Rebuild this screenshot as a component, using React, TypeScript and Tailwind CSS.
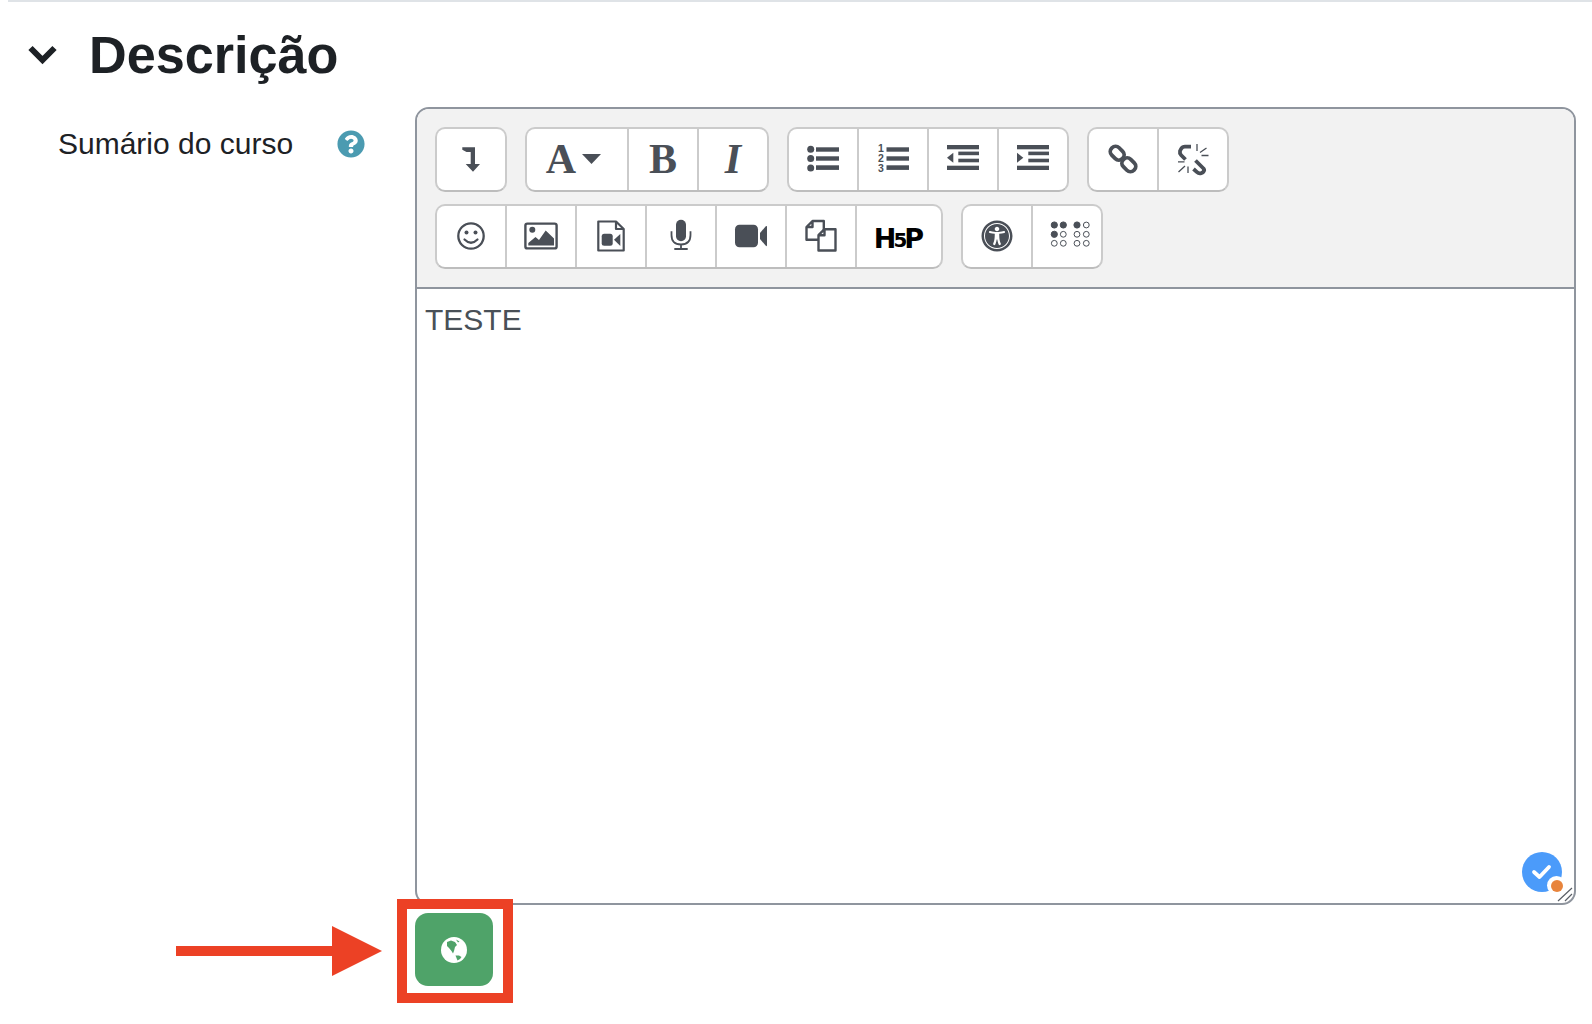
import React from "react";
import { FaQuestionCircle, FaUniversalAccess } from "react-icons/fa";

const C = "#4a4f57";

function Ico({ children, w = 40, h = 40 }: { children: React.ReactNode; w?: number; h?: number }) {
  return (
    <svg width={w} height={h} viewBox={`${-w / 2} ${-h / 2} ${w} ${h}`} fill={C} className="block shrink-0">
      {children}
    </svg>
  );
}

function Btn({ children, w, first }: { children: React.ReactNode; w: string; first?: boolean }) {
  return (
    <div className={`${w} ${first ? "" : "border-l-2 border-[#cbcbcb]"} pb-[2px] flex items-center justify-center`}>
      {children}
    </div>
  );
}

function Group({ children }: { children: React.ReactNode }) {
  return (
    <div className="flex h-[65px] bg-white rounded-[10px] border-2 border-[#cbcbcb] border-b-[#bdbdbd] overflow-hidden">
      {children}
    </div>
  );
}

const Bars = ({ x }: { x: number }) => (
  <>
    <rect x={x} y={-11.7} width={16 - x} height={4.4} />
    <rect x={x} y={-2.7} width={16 - x} height={4.4} />
    <rect x={x} y={6.3} width={16 - x} height={4.6} />
  </>
);

const IndentBars = () => (
  <>
    <rect x={-16} y={-14} width={32} height={4.3} />
    <rect x={-4.7} y={-7.4} width={20.7} height={3.6} />
    <rect x={-4.7} y={-0.3} width={20.7} height={3.6} />
    <rect x={-16} y={6.7} width={32} height={4.3} />
  </>
);

const W1 = "w-[68px]";
const W = "w-[70px]";

export default function App() {
  return (
    <div className="relative w-[1592px] h-[1024px] overflow-hidden bg-white font-['Liberation_Sans',sans-serif] text-[#1d2125]">
      <div className="ml-[8px] h-[2px] bg-[#dfe3e7]" />

      <div className="flex items-center h-[105px] pl-[28px]">
        <svg width="29" height="20" viewBox="0 0 29 20" fill="none" stroke="#1d2125" strokeWidth={6} className="block">
          <path d="M2.5 3L14.5 15L26.5 3" />
        </svg>
        <h2 className="ml-[32px] mt-[2px] text-[52.2px] leading-none font-bold">Descrição</h2>
      </div>

      <div className="flex">
        <div className="w-[415px] flex items-center h-[74px] pl-[58px] self-start">
          <span className="text-[30px] leading-none">Sumário do curso</span>
          <FaQuestionCircle size={28} className="ml-[44px] text-[#4b9bb1]" />
        </div>

        <div className="relative w-[1161px] h-[798px] border-2 border-[#8f959e] rounded-[14px] overflow-hidden">
          <div className="h-[180px] bg-[#f2f2f2] border-b-2 border-[#8f959e] pt-[18px] pl-[18px] flex flex-col gap-[12px]">
            <div className="flex gap-[18px]">
              <Group>
                <Btn w={W1} first>
                  <Ico>
                    <path d="M-8.7-11.7H4V5H9L2 12.7L-5.3 5H-0.3V-7H-4.5L-8.7-9.2Z" />
                  </Ico>
                </Btn>
              </Group>
              <Group>
                <Btn w="w-[100px]" first>
                  <span className="font-['Liberation_Serif',serif] font-bold text-[42px] leading-none text-[#4a4f57] mr-[6px]">A</span>
                  <svg width="19" height="10" viewBox="0 0 19 10" fill={C} className="mr-[7px]">
                    <path d="M0 0H19L9.5 10Z" />
                  </svg>
                </Btn>
                <Btn w={W}>
                  <span className="font-['Liberation_Serif',serif] font-bold text-[42px] leading-none text-[#4a4f57]">B</span>
                </Btn>
                <Btn w={W}>
                  <span className="font-['Liberation_Serif',serif] font-bold italic text-[42px] leading-none text-[#4a4f57]">I</span>
                </Btn>
              </Group>
              <Group>
                <Btn w={W1} first>
                  <Ico>
                    <circle cx={-12.3} cy={-9.7} r={3.5} />
                    <circle cx={-12.3} cy={-0.5} r={3.5} />
                    <circle cx={-12.3} cy={9} r={3.5} />
                    <Bars x={-7} />
                  </Ico>
                </Btn>
                <Btn w={W}>
                  <Ico>
                    <g fontFamily="'Liberation Sans',sans-serif" fontWeight="700" fontSize="10.5" textAnchor="middle">
                      <text x={-12} y={-7}>1</text>
                      <text x={-12} y={3}>2</text>
                      <text x={-12} y={13}>3</text>
                    </g>
                    <Bars x={-6.5} />
                  </Ico>
                </Btn>
                <Btn w={W}>
                  <Ico>
                    <IndentBars />
                    <path d="M-16-1.3L-9.7-6.3V3.7Z" />
                  </Ico>
                </Btn>
                <Btn w={W}>
                  <Ico>
                    <IndentBars />
                    <path d="M-9.7-1.3L-16-6.3V3.7Z" />
                  </Ico>
                </Btn>
              </Group>
              <Group>
                <Btn w={W1} first>
                  <Ico>
                    <g fill="none" stroke={C} strokeWidth={3.8}>
                      <rect x={-7.5} y={-5.2} width={15} height={10.4} rx={5} transform="translate(-5.8 -5.8) rotate(45)" />
                      <rect x={-7.5} y={-5.2} width={15} height={10.4} rx={5} transform="translate(5.8 5.8) rotate(45)" />
                    </g>
                  </Ico>
                </Btn>
                <Btn w={W}>
                  <Ico>
                    <g fill="none" stroke={C} strokeWidth={3.8} strokeLinejoin="round">
                      <path d="M-2-12.3H-8Q-10.5-12.3-12-10L-13-8Q-13.5-5.5-12-4L-7.5 0.5" />
                      <path d="M2.5 1.5L10.5 9.5Q12 11.5 10 13.2L8.5 14Q6 15 4 13.2L0.5 10" />
                    </g>
                    <g stroke={C} strokeWidth={1.3}>
                      <path d="M4-15V-8M7-6.5L13.5-11M8.5-3.5H15.5M-15 2.8H-8.5M-14.5 13L-8 7M-5 7.5V14" />
                    </g>
                  </Ico>
                </Btn>
              </Group>
            </div>

            <div className="flex gap-[18px]">
              <Group>
                <Btn w={W1} first>
                  <Ico>
                    <circle r={12.7} fill="none" stroke={C} strokeWidth={2.3} />
                    <circle cx={-4.5} cy={-3.5} r={2} />
                    <circle cx={4.5} cy={-3.5} r={2} />
                    <path d="M-6.5 3.5Q0 10 6.5 3.5" fill="none" stroke={C} strokeWidth={2.2} strokeLinecap="round" />
                  </Ico>
                </Btn>
                <Btn w={W}>
                  <Ico>
                    <rect x={-15.6} y={-12.4} width={31.2} height={24.8} rx={2} fill="none" stroke={C} strokeWidth={2.4} />
                    <circle cx={-8.7} cy={-6.2} r={3} />
                    <path d="M-12.7 9.5V7L-5.5 1L-2 4L4.7-5.5L13 2.5V9.5Z" />
                  </Ico>
                </Btn>
                <Btn w={W}>
                  <Ico>
                    <path d="M-12.7-14.5H5L12.7-7V14.5H-12.7Z M5-14V-7H12.5" fill="none" stroke={C} strokeWidth={2.2} strokeLinejoin="round" />
                    <rect x={-9.3} y={-2.2} width={11} height={12} rx={2.5} />
                    <path d="M3 3.8L9.3-2V10Z" />
                  </Ico>
                </Btn>
                <Btn w={W}>
                  <Ico>
                    <rect x={-5} y={-16.2} width={10} height={21.4} rx={5} />
                    <path d="M-9.5-4.8V-1Q-9.5 8.5 0 8.5Q9.5 8.5 9.5-1V-4.8M0 8.5V13M-6.7 13H6.7" fill="none" stroke={C} strokeWidth={1.8} />
                  </Ico>
                </Btn>
                <Btn w={W}>
                  <Ico>
                    <rect x={-16} y={-11.3} width={23} height={22.6} rx={4.5} />
                    <path d="M9-3L15-10Q16-10.5 16-9V9Q16 10.5 15 10L9 3Z" />
                  </Ico>
                </Btn>
                <Btn w={W}>
                  <Ico>
                    <g fill="#fff" stroke={C} strokeWidth={2.4} strokeLinejoin="round">
                      <path d="M-8.5-15H2.8V3.8H-14.5V-9Z M-8.5-15V-9H-14.5" />
                      <path d="M3.5-6.8H14.5V14.5H-2.5V-0.8Z M3.5-6.8V-0.8H-2.5" />
                    </g>
                  </Ico>
                </Btn>
                <Btn w="w-[86px]">
                  <span className="font-['DejaVu_Sans',sans-serif] font-bold text-[27px] leading-none text-black mt-[6px] flex items-center">
                    <span>H</span>
                    <span className="text-[20px] -mx-[3px] mt-[2px]">5</span>
                    <span>P</span>
                  </span>
                </Btn>
              </Group>
              <Group>
                <Btn w={W1} first>
                  <FaUniversalAccess size={32} color={C} />
                </Btn>
                <Btn w={W}>
                  <Ico w={48}>
                    <g stroke={C} strokeWidth={1} fill="none">
                      <circle cx={-12.7} cy={-11} r={3.1} fill={C} />
                      <circle cx={-3.7} cy={-11} r={3.1} fill={C} />
                      <circle cx={10} cy={-11} r={3.1} fill={C} />
                      <circle cx={19.3} cy={-11} r={2.9} />
                      <circle cx={-12.7} cy={-1.7} r={3.1} fill={C} />
                      <circle cx={-3.7} cy={-1.7} r={2.9} />
                      <circle cx={10} cy={-1.7} r={2.9} />
                      <circle cx={19.3} cy={-1.7} r={2.9} />
                      <circle cx={-12.7} cy={7.3} r={2.9} />
                      <circle cx={-3.7} cy={7.3} r={2.9} />
                      <circle cx={10} cy={7.3} r={2.9} />
                      <circle cx={19.3} cy={7.3} r={2.9} />
                    </g>
                  </Ico>
                </Btn>
              </Group>
            </div>
          </div>

          <div className="pl-[8px] pt-[14px] text-[30px] leading-[34px] text-[#495057]">TESTE</div>

          <div className="absolute right-[12px] bottom-[11px] w-[40px] h-[40px] rounded-full bg-[#4b9bfa] flex items-center justify-center">
            <svg width="22" height="18" viewBox="0 0 22 18" fill="none" stroke="#fff" strokeWidth={3.8} strokeLinecap="round" strokeLinejoin="round">
              <path d="M3 9L8.5 14L18 4" />
            </svg>
          </div>
          <svg width="18" height="18" viewBox="0 0 18 18" stroke="#5a5f66" strokeWidth={1.2} className="absolute right-0 bottom-0">
            <path d="M2 16L16 3M9 16L16 9" />
          </svg>
          <div className="absolute right-[8px] bottom-[8px] w-[19px] h-[19px] rounded-full bg-white flex items-center justify-center">
            <div className="w-[12px] h-[12px] rounded-full bg-[#e8843c]" />
          </div>
        </div>
      </div>

      <div className="ml-[415px] mt-[8px] w-[78px] h-[73px] rounded-[13px] bg-[#4fa369] flex items-center justify-center">
        <svg width="26" height="26" viewBox="-13 -13 26 26" className="block">
          <circle r={13} fill="#fff" />
          <path d="M-7-8L-3-9.5L1-8L3-5L1-3L0 1L-1 3.5L-2.5 1L-5-2L-7-4Z" fill="#4fa369" />
          <path d="M2-10.5L5.5-8.5L4-7.5Z" fill="#4fa369" />
          <path d="M1.5 5.5L5 5.5L7.5 7L6 9L3.5 10.5L2.5 8Z" fill="#4fa369" />
        </svg>
      </div>

      {/* annotation laid over the page */}
      <div className="absolute left-[397px] top-[899px] w-[116px] h-[104px] border-[10px] border-[#ec4125]" />
      <svg width="210" height="52" viewBox="0 0 210 52" className="absolute left-[176px] top-[925px]" fill="#ec4125">
        <path d="M0 21H156V1L206 26L156 51V31H0Z" />
      </svg>
    </div>
  );
}
